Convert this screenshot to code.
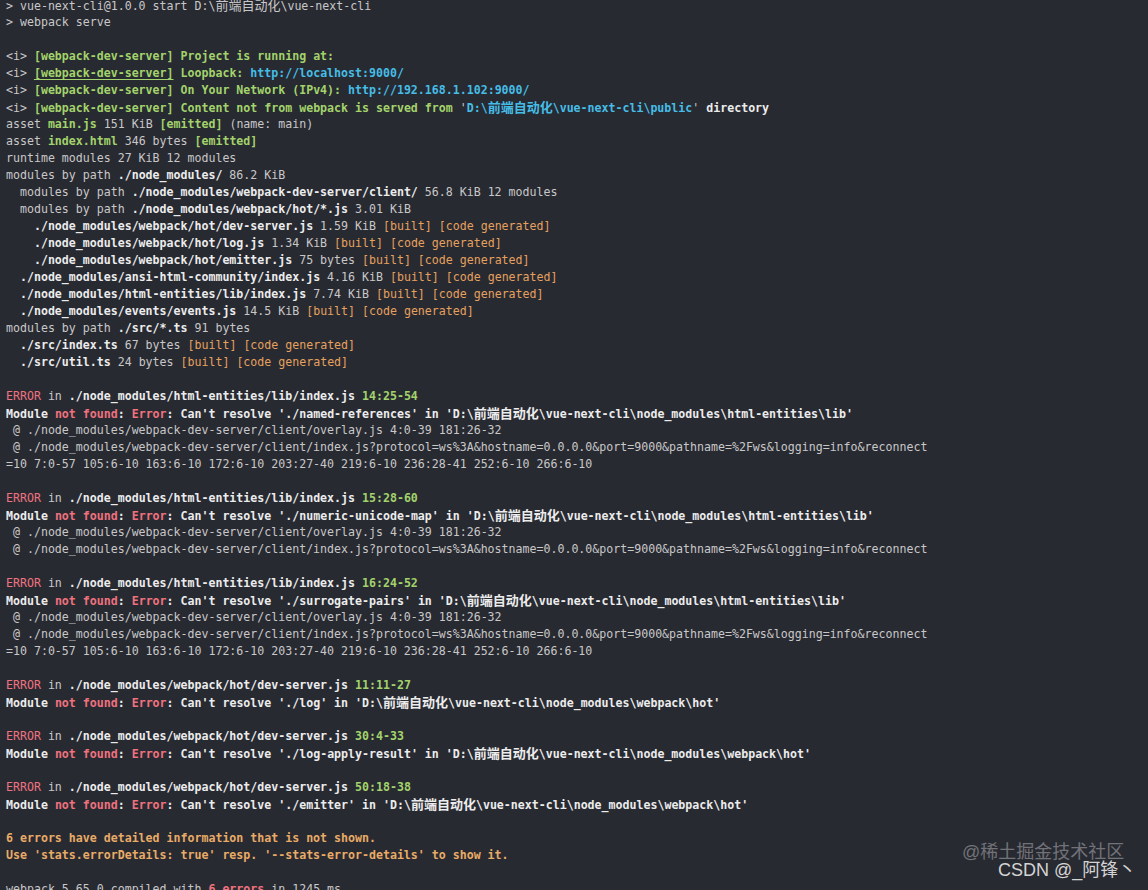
import React from 'react';

const G = ({ children }: { children: React.ReactNode }) => <span className="text-[#a3d36b] font-bold">{children}</span>;
const GN = ({ children }: { children: React.ReactNode }) => <span className="text-[#a3d36b] font-bold">{children}</span>;
const B = ({ children }: { children: React.ReactNode }) => <span className="text-[#ececec] font-bold">{children}</span>;
const C = ({ children }: { children: React.ReactNode }) => <span className="text-[#45bde6] font-bold">{children}</span>;
const O = ({ children }: { children: React.ReactNode }) => <span className="text-[#e6a15e]">{children}</span>;
const R = ({ children }: { children: React.ReactNode }) => <span className="text-[#f0727e]">{children}</span>;
const RB = ({ children }: { children: React.ReactNode }) => <span className="text-[#f0727e] font-bold">{children}</span>;
const Y = ({ children }: { children: React.ReactNode }) => <span className="text-[#e9ab66] font-bold">{children}</span>;
const CN = ({ children }: { children: React.ReactNode }) => <span className="text-[13px]">{children}</span>;

const built = (
    <>
        <O>[built]</O> <O>[code generated]</O>
    </>
);

const overlay = ' @ ./node_modules/webpack-dev-server/client/overlay.js 4:0-39 181:26-32';
const clientIdx = ' @ ./node_modules/webpack-dev-server/client/index.js?protocol=ws%3A&hostname=0.0.0.0&port=9000&pathname=%2Fws&logging=info&reconnect';
const refs = '=10 7:0-57 105:6-10 163:6-10 172:6-10 203:27-40 219:6-10 236:28-41 252:6-10 266:6-10';

function ErrorIn({ file, pos }: { file: string; pos: string }) {
    return (
        <>
            <R>ERROR</R> in <B>{file}</B> <G>{pos}</G>
        </>
    );
}

function NotFound({ name, dir }: { name: string; dir: string }) {
    return (
        <>
            <B>Module </B><RB>not found</RB><B>: </B><RB>Error</RB>
            <B>: Can't resolve '{name}' in 'D:\<CN>前端自动化</CN>\vue-next-cli\{dir}'</B>
        </>
    );
}

const wds = (under?: boolean) => (
    <span className={under ? 'text-[#a3d36b] font-bold underline underline-offset-2' : 'text-[#a3d36b] font-bold'}>[webpack-dev-server]</span>
);

export default function App() {
    const lines: React.ReactNode[] = [
        <>{'> vue-next-cli@1.0.0 start D:\\'}<CN>前端自动化</CN>{'\\vue-next-cli'}</>,
        '> webpack serve',
        '',
        <>{'<i> '}{wds()} <G>Project is running at:</G></>,
        <>{'<i> '}{wds(true)} <G>Loopback: </G><C>http://localhost:9000/</C></>,
        <>{'<i> '}{wds()} <G>On Your Network (IPv4): </G><C>http://192.168.1.102:9000/</C></>,
        <>{'<i> '}{wds()} <G>Content not from webpack is served from </G>'<C>D:\<CN>前端自动化</CN>\vue-next-cli\public</C>' <B>directory</B></>,
        <>asset <G>main.js</G> 151 KiB <GN>[emitted]</GN> (name: main)</>,
        <>asset <G>index.html</G> 346 bytes <GN>[emitted]</GN></>,
        'runtime modules 27 KiB 12 modules',
        <>modules by path <B>./node_modules/</B> 86.2 KiB</>,
        <>{'  '}modules by path <B>./node_modules/webpack-dev-server/client/</B> 56.8 KiB 12 modules</>,
        <>{'  '}modules by path <B>./node_modules/webpack/hot/*.js</B> 3.01 KiB</>,
        <>{'    '}<B>./node_modules/webpack/hot/dev-server.js</B> 1.59 KiB {built}</>,
        <>{'    '}<B>./node_modules/webpack/hot/log.js</B> 1.34 KiB {built}</>,
        <>{'    '}<B>./node_modules/webpack/hot/emitter.js</B> 75 bytes {built}</>,
        <>{'  '}<B>./node_modules/ansi-html-community/index.js</B> 4.16 KiB {built}</>,
        <>{'  '}<B>./node_modules/html-entities/lib/index.js</B> 7.74 KiB {built}</>,
        <>{'  '}<B>./node_modules/events/events.js</B> 14.5 KiB {built}</>,
        <>modules by path <B>./src/*.ts</B> 91 bytes</>,
        <>{'  '}<B>./src/index.ts</B> 67 bytes {built}</>,
        <>{'  '}<B>./src/util.ts</B> 24 bytes {built}</>,
        '',
        <ErrorIn file="./node_modules/html-entities/lib/index.js" pos="14:25-54" />,
        <NotFound name="./named-references" dir="node_modules\html-entities\lib" />,
        overlay,
        clientIdx,
        refs,
        '',
        <ErrorIn file="./node_modules/html-entities/lib/index.js" pos="15:28-60" />,
        <NotFound name="./numeric-unicode-map" dir="node_modules\html-entities\lib" />,
        overlay,
        clientIdx,
        '',
        <ErrorIn file="./node_modules/html-entities/lib/index.js" pos="16:24-52" />,
        <NotFound name="./surrogate-pairs" dir="node_modules\html-entities\lib" />,
        overlay,
        clientIdx,
        refs,
        '',
        <ErrorIn file="./node_modules/webpack/hot/dev-server.js" pos="11:11-27" />,
        <NotFound name="./log" dir="node_modules\webpack\hot" />,
        '',
        <ErrorIn file="./node_modules/webpack/hot/dev-server.js" pos="30:4-33" />,
        <NotFound name="./log-apply-result" dir="node_modules\webpack\hot" />,
        '',
        <ErrorIn file="./node_modules/webpack/hot/dev-server.js" pos="50:18-38" />,
        <NotFound name="./emitter" dir="node_modules\webpack\hot" />,
        '',
        <Y>6 errors have detailed information that is not shown.</Y>,
        <Y>Use 'stats.errorDetails: true' resp. '--stats-error-details' to show it.</Y>,
        '',
        <>webpack 5.65.0 compiled with <RB>6 errors</RB> in 1245 ms</>,
    ];

    return (
        <div className="relative w-[1148px] h-[890px] overflow-hidden bg-[#282a32]">
            <div className="-mt-[3px] px-[6px] font-['DejaVu_Sans_Mono','Noto_Sans_CJK_SC',monospace] text-[11.6px] leading-[17px] text-[#c8c8c8]">
                {lines.map((line, i) => (
                    <div key={i} className="h-[17px] whitespace-pre">{line}</div>
                ))}
            </div>
            <div className="absolute left-[962px] top-[842px] font-['Liberation_Sans','Noto_Sans_CJK_SC',sans-serif] text-[18px] leading-[20px] text-white/35 whitespace-nowrap">
                @稀土掘金技术社区
            </div>
            <div className="absolute left-[998px] top-[860px] font-['Liberation_Sans','Noto_Sans_CJK_SC',sans-serif] text-[18px] leading-[20px] text-[#d4d4d4] whitespace-nowrap">
                CSDN @_阿锋丶
            </div>
        </div>
    );
}
